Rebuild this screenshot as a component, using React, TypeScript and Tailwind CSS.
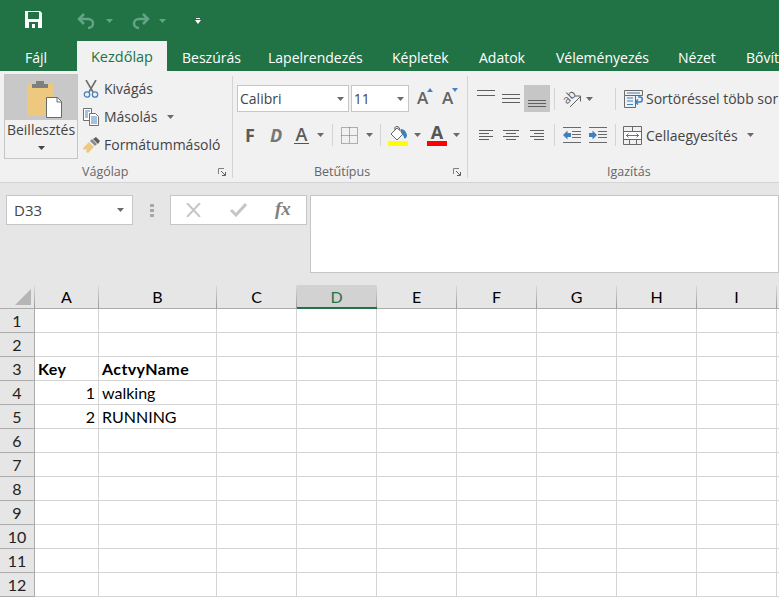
const ui = "font-['Open_Sans','Noto_Sans',sans-serif]";

function Caret({ className = "fill-[#6a6a6a]" }: { className?: string }) {
  return (
    <svg width="7" height="4" viewBox="0 0 7 4" className={className}>
      <path d="M0 0h7L3.5 4z" />
    </svg>
  );
}

function Lines({ widths, gap = 4, align = "start", size = 18 }: { widths: number[]; gap?: number; align?: "start" | "center" | "end"; size?: number }) {
  return (
    <svg width={size} height={(widths.length - 1) * gap + 1} className="block">
      {widths.map((w, i) => {
        const x = align === "start" ? 0 : align === "end" ? size - w : (size - w) / 2;
        return <rect key={i} x={x} y={i * gap} width={w} height="1" fill="#5f5f5f" />;
      })}
    </svg>
  );
}

function SaveIcon() {
  return (
    <svg width="17" height="17" viewBox="0 0 17 17">
      <path d="M0 0h15l2 2v15H0z" fill="#fff" />
      <rect x="3" y="1" width="11" height="7" fill="#217346" />
      <rect x="4" y="11" width="9" height="6" fill="#217346" />
      <rect x="7" y="13" width="3" height="4" fill="#fff" />
    </svg>
  );
}

function UndoIcon({ flip }: { flip?: boolean }) {
  return (
    <svg width="19" height="16" viewBox="0 0 19 16" className={flip ? "-scale-x-100" : ""}>
      <path d="M7 1 2 6l5 5M2 6h9c3 0 5 2 5 4.500S14 15 11 15" fill="none" stroke="#65a385" strokeWidth="2.500" />
    </svg>
  );
}

function Clipboard() {
  return (
    <svg width="36" height="40" viewBox="0 0 36 40">
      <path d="M1 5h26v32H1z" fill="#edc87e" />
      <path d="M6 5h16v4H6zM10 2h8v3h-8z" fill="#7f7f7f" />
      <path d="M20.500 18.500h11l4 4v16h-15z" fill="#fff" stroke="#6a6a6a" />
      <path d="M31 18.500v4.500h4.500" fill="none" stroke="#6a6a6a" />
    </svg>
  );
}

function Scissors() {
  return (
    <svg width="16" height="18" viewBox="0 0 16 18">
      <path d="M3 0l7 12M13 0 6 12" stroke="#6f6f6f" strokeWidth="1.600" fill="none" />
      <circle cx="4" cy="14.500" r="2.700" fill="none" stroke="#4a83bd" strokeWidth="1.300" />
      <circle cx="12" cy="14.500" r="2.700" fill="none" stroke="#4a83bd" strokeWidth="1.300" />
    </svg>
  );
}

function CopyIcon() {
  return (
    <svg width="17" height="18" viewBox="0 0 17 18">
      <path d="M.5.500h8v12h-8z" fill="#fff" stroke="#6f6f6f" />
      <path d="M6.500 5.500h6l3 3v9h-9z" fill="#fff" stroke="#6f6f6f" />
      <path d="M2 3h5M2 5h3M2 7h3M2 9h3M8 9h6M8 11h6M8 13h6M8 15h6" stroke="#4a83bd" />
    </svg>
  );
}

function Brush() {
  return (
    <svg width="17" height="16" viewBox="0 0 17 16">
      <path d="M0 11l6-6 5 5-6 6-2-1 1-3-3 1z" fill="#edc87e" />
      <path d="M7 4l2-2 5 5-2 2z" fill="#8a8a8a" />
      <path d="M10 2l3-2 4 4-2 3z" fill="#5f5f5f" />
    </svg>
  );
}

function Launcher() {
  return (
    <svg width="8" height="8" viewBox="0 0 8 8" fill="none" stroke="#7f7f7f">
      <path d="M.5 6V.5H6" />
      <path d="M3 3l4 4M4 7.500h3.500V4" stroke="#5f5f5f" />
    </svg>
  );
}

function GrowFont({ down }: { down?: boolean }) {
  return (
    <div className="flex h-[22px] w-[25px] items-start">
      <span className="text-[17px] leading-[22px] font-semibold text-[#636363]">A</span>
      <svg width="6" height="4" viewBox="0 0 6 4" className="-ml-[1px] mt-[1px]">
        <path d={down ? "M0 0h6L3 4z" : "M3 0l3 4H0z"} fill="#4a83bd" />
      </svg>
    </div>
  );
}

function BordersIcon() {
  return (
    <svg width="17" height="17" viewBox="0 0 17 17" fill="none" stroke="#6a6a6a" strokeDasharray="1 1" className="block">
      <path d="M.5.500h16v16H.5zM8.500.500v16M.5 8.500h16" />
    </svg>
  );
}

function FillIcon() {
  return (
    <div className="flex w-[20px] flex-col pt-[1px]">
      <svg width="20" height="15" viewBox="0 0 20 15" className="block">
        <path d="M9 2 3 8l6 6 6.500-6.500z" fill="#fff" stroke="#6a6a6a" />
        <path d="M7 4V1.500C7 .5 10 0 11 1.500L12 4" fill="none" stroke="#555" />
        <path d="M13 3c3 0 5 2 6 6 0 3-2 4-3 3 0-2-1-3-3-5z" fill="#3f7fbf" />
      </svg>
      <div className="h-[5px] bg-[#ffff00]" />
    </div>
  );
}

function RotateIcon() {
  return (
    <svg width="20" height="18" viewBox="0 0 20 18" className="block">
      <text x="0" y="11" transform="rotate(-45 7 7)" fontSize="12" fontFamily="Open Sans, sans-serif" fill="#5f5f5f">ab</text>
      <path d="M8 17 18 7M13 6h5.500v5.500" fill="none" stroke="#5f5f5f" />
    </svg>
  );
}

function IndentIcon({ right }: { right?: boolean }) {
  return (
    <svg width="18" height="16" viewBox="0 0 18 16" className="block">
      <path d="M0 .5h18M9 4.500h9M9 7.500h9M9 10.500h9M0 15.500h18" stroke="#6a6a6a" />
      <path d={right ? "M8 8 3.500 3.500V6H0v4h3.500v2.500z" : "M0 8 4.500 3.500V6H8v4H4.500v2.500z"} fill="#3f7fbf" />
    </svg>
  );
}

function WrapIcon() {
  return (
    <svg width="19" height="18" viewBox="0 0 19 18" className="block">
      <path d="M.5.500h18v5H.5zM.5 5.500v12h11v-12" fill="none" stroke="#6a6a6a" />
      <path d="M3 3h13M3 8h6M3 11h6M3 14.500h6" stroke="#3f7fbf" />
      <path d="M12 12h4c3 0 3-5 0-5h-2M14 9.500 11.500 12l2.500 2.500" fill="none" stroke="#3f7fbf" strokeWidth="1.500" />
    </svg>
  );
}

function MergeIcon() {
  return (
    <svg width="19" height="19" viewBox="0 0 19 19" className="block">
      <path d="M.5.500h18v18H.5zM.5 5.500h18M.5 13.500h18M9.500.500v5M6.500 13.500v5M13.500 13.500v5" fill="none" stroke="#6a6a6a" />
      <rect x="1" y="6" width="17" height="7" fill="#fff" />
      <path d="M3 9.500h13M5.500 7.500l-2 2 2 2M13.500 7.500l2 2-2 2" fill="none" stroke="#3f7fbf" />
    </svg>
  );
}

const tabs = [
  { label: "Beszúrás", className: "w-[86px]" },
  { label: "Lapelrendezés", className: "w-[124px]" },
  { label: "Képletek", className: "w-[87px]" },
  { label: "Adatok", className: "w-[77px]" },
  { label: "Véleményezés", className: "w-[122px]" },
  { label: "Nézet", className: "w-[68px]" },
  { label: "Bővít", className: "w-[50px]" },
];

function TitleBar() {
  return (
    <div className="flex h-[41px] items-center bg-[#217346]">
      <div className="mb-[3px] ml-[25px] flex w-[17px]"><SaveIcon /></div>
      <div className="ml-[35px] flex items-center gap-[10px]"><UndoIcon /><Caret className="fill-[#65a385]" /></div>
      <div className="ml-[18px] flex items-center gap-[9px]"><UndoIcon flip /><Caret className="fill-[#65a385]" /></div>
      <svg width="6" height="6" viewBox="0 0 6 6" className="ml-[29px]" fill="#fff"><path d="M1 0h4v1H1zM0 2h6L3 6z" /></svg>
    </div>
  );
}

function TabRow() {
  return (
    <div className={`flex h-[30px] items-end bg-[#217346] text-[14px] text-white ${ui}`}>
      <div className="flex h-[30px] w-[77px] shrink-0 items-center pt-[2px] pl-[25px]">Fájl</div>
      <div className="flex h-[30px] w-[90px] shrink-0 items-center justify-center bg-[#f1f1f1] pt-[2px] text-[14.5px] text-[#217346]">Kezdőlap</div>
      <div className="w-[15px] shrink-0" />
      {tabs.map((t) => (
        <div key={t.label} className={`flex h-[30px] shrink-0 items-center whitespace-nowrap pt-[2px] ${t.className}`}>{t.label}</div>
      ))}
    </div>
  );
}

function ClipboardGroup() {
  return (
    <div className="flex h-[111px] w-[232px] shrink-0 flex-col pt-[3px]">
      <div className="flex h-[85px]">
        <div className="ml-[4px] flex h-[85px] w-[74px] flex-col items-center border border-[#c6c6c6]">
          <div className="flex h-[45px] w-full justify-center bg-[#c8c8c8] pt-[4px] pl-[6px]"><Clipboard /></div>
          <div className="text-[14px] leading-[19px] text-[#444]">Beillesztés</div>
          <div className="mt-[7px]"><Caret className="fill-[#444]" /></div>
        </div>
        <div className="ml-[5px] flex flex-col gap-[10px] pt-[6px] text-[14px] leading-[18px] text-[#444]">
          <div className="flex items-center"><span className="flex w-[21px]"><Scissors /></span><span>Kivágás</span></div>
          <div className="flex items-center"><span className="flex w-[21px]"><CopyIcon /></span><span>Másolás</span><span className="ml-[10px]"><Caret /></span></div>
          <div className="flex items-center"><span className="flex w-[21px]"><Brush /></span><span>Formátummásoló</span></div>
        </div>
      </div>
      <div className="mt-[3px] flex h-[20px] items-center pr-[6px] text-[12.5px] text-[#666]">
        <span className="ml-[82px] flex-1">Vágólap</span>
        <Launcher />
      </div>
    </div>
  );
}

function FontGroup() {
  return (
    <div className="flex h-[111px] w-[234px] shrink-0 flex-col pt-[14px] pl-[4px]">
      <div className="flex h-[27px]">
        <div className="flex w-[113px] items-center justify-between border border-[#c6c6c6] bg-white pr-[4px] pl-[2px] text-[14px] text-[#444]">
          <span>Calibri</span><Caret />
        </div>
        <div className="ml-[2px] flex w-[59px] items-center justify-between border border-[#c6c6c6] bg-white pr-[4px] pl-[2px] text-[14px] text-[#444]">
          <span>11</span><Caret />
        </div>
        <div className="ml-[8px] flex pt-[2px]"><GrowFont /><GrowFont down /></div>
      </div>
      <div className="mt-[12px] flex h-[22px] items-center text-[#5a5a5a]">
        <span className="ml-[8px] w-[25px] text-[18px] leading-none font-bold">F</span>
        <span className="w-[24px] text-[18px] leading-none font-bold italic text-[#777]">D</span>
        <span className="flex w-[23px] flex-col">
          <span className="w-[15px] text-center text-[18px] leading-[15px] font-semibold">A</span>
          <span className="mt-[1px] h-px w-[15px] bg-[#555]" />
        </span>
        <Caret />
        <div className="ml-[8px] h-[22px] w-px bg-[#d4d4d4]" />
        <span className="ml-[8px]"><BordersIcon /></span>
        <span className="ml-[8px]"><Caret /></span>
        <div className="ml-[7px] h-[22px] w-px bg-[#d4d4d4]" />
        <span className="ml-[7px]"><FillIcon /></span>
        <span className="ml-[6px]"><Caret /></span>
        <div className="ml-[6px] flex w-[20px] flex-col items-center pt-[1px]">
          <span className="text-[18px] leading-[15px] font-bold text-[#555]">A</span>
          <div className="mt-[1px] h-[5px] w-full bg-[#ff0000]" />
        </div>
        <span className="ml-[6px]"><Caret /></span>
      </div>
      <div className="mt-[16px] flex h-[20px] items-center pr-[6px] text-[12.5px] text-[#666]">
        <span className="ml-[77px] flex-1">Betűtípus</span>
        <Launcher />
      </div>
    </div>
  );
}

function AlignGroup() {
  return (
    <div className="flex h-[111px] min-w-0 flex-1 flex-col overflow-hidden pt-[14px] pl-[5px]">
      <div className="flex h-[27px] items-center">
        <div className="flex h-[27px] w-[25px] items-start justify-center pt-[5px]"><Lines widths={[18, 18]} gap={5} /></div>
        <div className="flex h-[27px] w-[26px] items-center justify-center"><Lines widths={[18, 18, 18]} gap={4} /></div>
        <div className="flex h-[27px] w-[26px] items-end justify-center bg-[#c6c6c6] pb-[5px]"><Lines widths={[18, 18, 18]} gap={3} /></div>
        <div className="ml-[4px] h-[22px] w-px bg-[#d4d4d4]" />
        <span className="ml-[7px]"><RotateIcon /></span>
        <span className="ml-[4px]"><Caret /></span>
        <div className="ml-[22px] h-[22px] w-px bg-[#d4d4d4]" />
        <span className="ml-[8px]"><WrapIcon /></span>
        <span className={`ml-[3px] whitespace-nowrap text-[14px] text-[#444] ${ui}`}>Sortöréssel több sor</span>
      </div>
      <div className="mt-[12px] flex h-[22px] items-center">
        <div className="flex w-[25px] justify-center"><Lines size={14} widths={[14, 10, 14, 10]} gap={3} /></div>
        <div className="flex w-[26px] justify-center"><Lines size={16} widths={[16, 10, 16, 10]} gap={3} align="center" /></div>
        <div className="flex w-[26px] justify-center"><Lines size={14} widths={[14, 10, 14, 10]} gap={3} align="end" /></div>
        <div className="ml-[4px] h-[22px] w-px bg-[#d4d4d4]" />
        <span className="ml-[8px]"><IndentIcon /></span>
        <span className="ml-[8px]"><IndentIcon right /></span>
        <div className="ml-[8px] h-[22px] w-px bg-[#d4d4d4]" />
        <span className="ml-[7px]"><MergeIcon /></span>
        <span className={`ml-[4px] whitespace-nowrap text-[14px] text-[#444] ${ui}`}>Cellaegyesítés</span>
        <span className="ml-[9px]"><Caret /></span>
      </div>
      <div className="mt-[16px] flex h-[20px] items-center text-[12.5px] text-[#666]">
        <span className="ml-[134px]">Igazítás</span>
      </div>
    </div>
  );
}

function GroupDivider() {
  return <div className="mt-[5px] h-[102px] w-px shrink-0 bg-[#d4d4d4]" />;
}

function Ribbon() {
  return (
    <div className={`flex h-[112px] border-b border-[#d4d4d4] bg-[#f1f1f1] ${ui}`}>
      <ClipboardGroup />
      <GroupDivider />
      <FontGroup />
      <GroupDivider />
      <AlignGroup />
    </div>
  );
}

function FormulaBar() {
  return (
    <div className={`flex h-[102px] bg-[#e6e6e6] pt-[12px] ${ui}`}>
      <div className="ml-[6px] flex h-[30px] w-[127px] items-center justify-between border border-[#c6c6c6] bg-white pr-[8px] pl-[7px] text-[15px] text-[#444]">
        <span>D33</span><Caret />
      </div>
      <div className="ml-[17px] flex h-[30px] w-[4px] flex-col items-center justify-center gap-[2px]">
        <div className="h-[3px] w-[4px] bg-[#a8a8a8]" /><div className="h-[3px] w-[4px] bg-[#a8a8a8]" /><div className="h-[3px] w-[4px] bg-[#a8a8a8]" />
      </div>
      <div className="ml-[16px] flex h-[30px] w-[137px] items-center border border-[#c6c6c6] bg-white">
        <svg width="15" height="14" viewBox="0 0 15 14" className="ml-[15px]" fill="none" stroke="#c6c6c6" strokeWidth="2"><path d="M1 0l13 14M14 0 1 14" /></svg>
        <svg width="17" height="14" viewBox="0 0 17 14" className="ml-[29px]" fill="none" stroke="#c6c6c6" strokeWidth="3"><path d="M1 7l5 5L16 1" /></svg>
        <span className="mb-[4px] ml-[28px] font-['Liberation_Serif',serif] text-[19px] leading-none font-bold italic text-[#808080]">fx</span>
      </div>
      <div className="ml-[3px] h-[78px] flex-1 border border-[#c6c6c6] bg-white" />
    </div>
  );
}

const columns = [
  { name: "A", w: 64 },
  { name: "B", w: 118 },
  { name: "C", w: 80 },
  { name: "D", w: 80 },
  { name: "E", w: 80 },
  { name: "F", w: 80 },
  { name: "G", w: 80 },
  { name: "H", w: 80 },
  { name: "I", w: 80 },
  { name: "J", w: 80 },
];

const rows: Record<number, Record<string, { v: string; bold?: boolean; right?: boolean }>> = {
  3: { A: { v: "Key", bold: true }, B: { v: "ActvyName", bold: true } },
  4: { A: { v: "1", right: true }, B: { v: "walking" } },
  5: { A: { v: "2", right: true }, B: { v: "RUNNING" } },
};

function Sheet() {
  return (
    <div className="min-h-0 flex-1 overflow-hidden bg-white font-['Lato','Open_Sans',sans-serif] text-[16px] text-black">
      <div className="flex h-[24px] bg-[#e6e6e6]">
        <div className="flex h-[24px] w-[35px] shrink-0 border-b border-[#ababab]">
          <div className="flex flex-1 items-end justify-end pr-[3px] pb-[3px]">
            <svg width="16" height="16" viewBox="0 0 16 16"><path d="M16 0v16H0z" fill="#b5b5b5" /></svg>
          </div>
          <div className="w-px bg-gradient-to-b from-[#dcdcdc] to-[#9a9a9a]" />
        </div>
        {columns.map((c) => (
          <div
            key={c.name}
            style={{ width: c.w }}
            className={
              c.name === "D"
                ? "flex h-[24px] shrink-0 border-b-2 border-[#217346] bg-[#d2d2d2] text-[#217346]"
                : "flex h-[24px] shrink-0 border-b border-[#ababab]"
            }
          >
            <div className="flex flex-1 items-center justify-center pt-[1px]">{c.name}</div>
            <div className="w-px bg-gradient-to-b from-[#dcdcdc] to-[#9a9a9a]" />
          </div>
        ))}
      </div>
      {Array.from({ length: 12 }, (_, i) => i + 1).map((r) => (
        <div key={r} className="flex h-[24px]">
          <div className="flex h-[24px] w-[35px] shrink-0 items-center justify-center border-r border-b border-[#ababab] bg-[#e6e6e6] pt-[1px] text-[#222]">{r}</div>
          {columns.map((c) => {
            const cell = rows[r]?.[c.name];
            return (
              <div
                key={c.name}
                style={{ width: c.w }}
                className={`flex h-[24px] shrink-0 items-center border-r border-b border-[#d4d4d4] px-[3px] pt-[1px] ${cell?.right ? "justify-end" : ""} ${cell?.bold ? "font-bold tracking-[0.4px]" : ""}`}
              >
                {cell?.v}
              </div>
            );
          })}
        </div>
      ))}
    </div>
  );
}

export default function App() {
  return (
    <div className="flex h-[598px] w-[779px] flex-col overflow-hidden">
      <TitleBar />
      <TabRow />
      <Ribbon />
      <FormulaBar />
      <Sheet />
    </div>
  );
}
